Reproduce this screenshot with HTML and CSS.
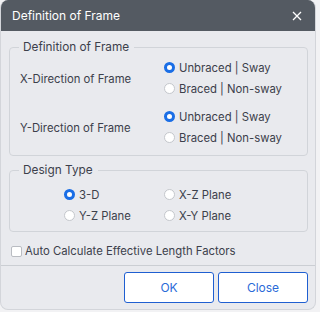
FILE: index.html
```html
<!DOCTYPE html>
<html>
<head>
<meta charset="utf-8">
<link rel="stylesheet" href="styles.css">
</head>
<body>
<div class="window">
  <div class="titlebar">
    <span class="title">Definition of Frame</span>
    <svg class="close" width="10" height="10" viewBox="0 0 10 10"><path d="M1 1L9 9M9 1L1 9" stroke="#fff" stroke-width="1.3" fill="none"/></svg>
  </div>
  <div class="content">
    <fieldset class="group frame">
      <legend>Definition of Frame</legend>
      <div class="dir">
        <div class="dir-label">X-Direction of Frame</div>
        <div class="opts">
          <label class="radio"><span class="dot on"></span>Unbraced | Sway</label>
          <label class="radio"><span class="dot"></span>Braced | Non-sway</label>
        </div>
      </div>
      <div class="dir">
        <div class="dir-label">Y-Direction of Frame</div>
        <div class="opts">
          <label class="radio"><span class="dot on"></span>Unbraced | Sway</label>
          <label class="radio"><span class="dot"></span>Braced | Non-sway</label>
        </div>
      </div>
    </fieldset>
    <fieldset class="group design">
      <legend>Design Type</legend>
      <div class="design-grid">
        <label class="radio"><span class="dot on"></span>3-D</label>
        <label class="radio"><span class="dot"></span>X-Z Plane</label>
        <label class="radio"><span class="dot"></span>Y-Z Plane</label>
        <label class="radio"><span class="dot"></span>X-Y Plane</label>
      </div>
    </fieldset>
    <label class="check"><span class="box"></span>Auto Calculate Effective Length Factors</label>
  </div>
  <div class="footer">
    <button class="btn">OK</button>
    <button class="btn">Close</button>
  </div>
</div>
</body>
</html>
```

FILE: styles.css
```css
* { box-sizing: border-box; }
html, body { margin: 0; padding: 0; }
body {
  width: 318px;
  height: 312px;
  background: #f2f2f4;
  font-family: Inter, "Noto Sans", sans-serif;
  font-size: 11.3px;
  color: #3c404b;
  overflow: hidden;
}
.window {
  width: 316px;
  height: 310px;
  background: #e9eaee;
  border: 1px solid #d3d5da;
  border-top: none;
  border-radius: 8px 8px 8px 8px;
  overflow: hidden;
  display: flex;
  flex-direction: column;
}
.titlebar {
  height: 31px;
  background: #545a62;
  color: #fff;
  display: flex;
  align-items: center;
  justify-content: space-between;
  padding: 0 13px 0 11px;
  font-size: 12px;
}
.close { display: block; }
.content {
  padding: 9px 7px 0 8px;
}
.group {
  margin: 0;
  border: 1px solid #d1d4d9;
  border-radius: 4px;
  padding: 0 10px 7px 10px;
  min-width: 0;
}
.group legend {
  padding: 0 5px 0 4px;
  margin-left: -1px;
  line-height: 15px;
  font-size: 11.8px;
}
.frame { padding-top: 2px; padding-bottom: 7px; }
.dir {
  display: flex;
  align-items: center;
}
.dir + .dir { margin-top: 7px; }
.dir-label { width: 144px; padding-top: 1px; }
.opts { display: flex; flex-direction: column; }
.radio {
  display: flex;
  align-items: center;
  height: 21px;
  white-space: nowrap;
}
.dot {
  width: 11px;
  height: 11px;
  border-radius: 50%;
  border: 1px solid #c4c7cc;
  background: #fff;
  margin-right: 4px;
  flex: none;
}
.dot.on {
  border: 3px solid #1a6ee6;
  background: #fff;
}
.design { margin-top: 7px; padding-top: 6px; padding-bottom: 5px; }
.design-grid {
  display: grid;
  grid-template-columns: 100px 100px;
  padding-left: 44px;
}
.check {
  display: flex;
  align-items: center;
  height: 20px;
  margin-top: 9px;
  padding-left: 2px;
}
.box {
  width: 11px;
  height: 11px;
  border: 1px solid #b9bcc2;
  border-radius: 2px;
  background: #fff;
  margin-right: 3px;
}
.footer {
  margin-top: 4px;
  border-top: 1px solid #cbced3;
  display: flex;
  justify-content: flex-end;
  gap: 4px;
  padding: 6px 7px 0 0;
}
.btn {
  width: 90px;
  height: 31px;
  border: 1px solid #1f5fd1;
  border-radius: 3px;
  background: #fff;
  color: #2a6ad8;
  font-family: Inter, "Noto Sans", sans-serif;
  font-size: 12px;
  padding: 0;
}
```
